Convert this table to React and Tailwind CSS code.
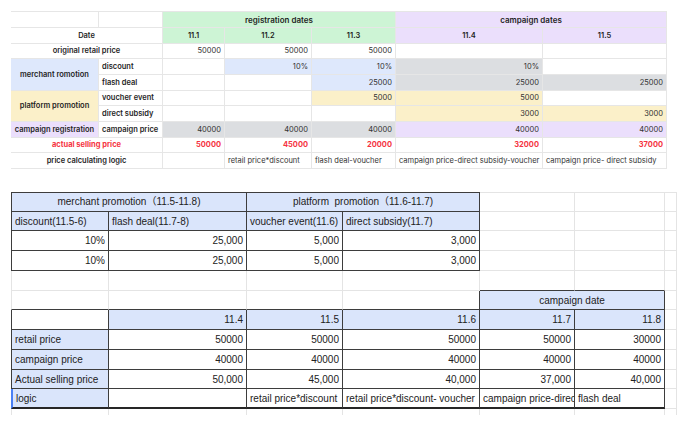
const green = "bg-[#cdf4d5]";
const purple = "bg-[#ebdffc]";
const blue = "bg-[#dee8fc]";
const yellow = "bg-[#fbf0c9]";
const gray = "bg-[#dcdee1]";

const TC = ({ className = "", children }) => (
  <div
    className={
      "flex items-center whitespace-nowrap overflow-hidden px-[3px] border-r border-b border-[#e6e6e6] " +
      className
    }
  >
    {children}
  </div>
);

const Rr = { d: "border-r border-r-[#3d3d3d]", f: "border-r border-r-[#e4e4e4]" };
const Bb = { d: "border-b border-b-[#3d3d3d]", f: "border-b border-b-[#e4e4e4]", k: "border-b-2 border-b-[#262626]" };
const Tt = { d: "border-t border-t-[#3d3d3d]", f: "border-t border-t-[#e4e4e4]" };
const Ll = { d: "border-l border-l-[#3d3d3d]", f: "border-l border-l-[#e4e4e4]", s: "border-l-2 border-l-[#4a80f5]" };

const BC = ({ r = "f", b = "f", t, l, className = "", children }) => (
  <div
    className={[
      "flex items-center whitespace-nowrap overflow-hidden px-[3px]",
      Rr[r],
      b && Bb[b],
      t && Tt[t],
      l && Ll[l],
      className,
    ]
      .filter(Boolean)
      .join(" ")}
  >
    {children}
  </div>
);

const bold = "font-semibold text-[#1f1f1f]";
const num = "justify-end text-[#333]";
const red = "justify-end font-bold text-[#f5333f]";

function TopTable() {
  return (
    <div className="grid grid-cols-[88px_64px_62px_87px_84px_147px_124px] grid-rows-[17px_repeat(9,15.67px)] text-[7.5px] font-['Inter',sans-serif] text-[#222]">
      {/* header */}
      <TC className="border-t" />
      <TC className="border-t" />
      <TC className={`col-span-3 justify-center border-t text-[8px] ${green} ${bold}`}>registration dates</TC>
      <TC className={`col-span-2 justify-center border-t text-[8px] ${purple} ${bold}`}>campaign dates</TC>

      <TC className={`col-span-2 justify-center ${bold}`}>Date</TC>
      <TC className={`justify-center ${green} ${bold}`}>11.1</TC>
      <TC className={`justify-center ${green} ${bold}`}>11.2</TC>
      <TC className={`justify-center ${green} ${bold}`}>11.3</TC>
      <TC className={`justify-center ${purple} ${bold}`}>11.4</TC>
      <TC className={`justify-center ${purple} ${bold}`}>11.5</TC>

      <TC className={`col-span-2 justify-center ${bold}`}>original retail price</TC>
      <TC className={num}>50000</TC>
      <TC className={num}>50000</TC>
      <TC className={num}>50000</TC>
      <TC />
      <TC />

      <TC className={`row-span-2 justify-center ${blue} ${bold}`}>merchant romotion</TC>
      <TC className={bold}>discount</TC>
      <TC />
      <TC className={`${num} ${blue}`}>10%</TC>
      <TC className={`${num} ${blue}`}>10%</TC>
      <TC className={`${num} ${gray}`}>10%</TC>
      <TC />

      <TC className={bold}>flash deal</TC>
      <TC />
      <TC />
      <TC className={`${num} ${blue}`}>25000</TC>
      <TC className={`${num} ${gray}`}>25000</TC>
      <TC className={`${num} ${gray}`}>25000</TC>

      <TC className={`row-span-2 justify-center ${yellow} ${bold}`}>platform promotion</TC>
      <TC className={bold}>voucher event</TC>
      <TC />
      <TC />
      <TC className={`${num} ${yellow}`}>5000</TC>
      <TC className={`${num} ${yellow}`}>5000</TC>
      <TC />

      <TC className={bold}>direct subsidy</TC>
      <TC />
      <TC />
      <TC />
      <TC className={`${num} ${yellow}`}>3000</TC>
      <TC className={`${num} ${yellow}`}>3000</TC>

      <TC className={`justify-center ${purple} ${bold}`}>campaign registration</TC>
      <TC className={bold}>campaign price</TC>
      <TC className={`${num} ${gray}`}>40000</TC>
      <TC className={`${num} ${gray}`}>40000</TC>
      <TC className={`${num} ${gray}`}>40000</TC>
      <TC className={`${num} ${purple}`}>40000</TC>
      <TC className={`${num} ${purple}`}>40000</TC>

      <TC className="col-span-2 justify-center font-bold text-[#f5333f]">actual selling price</TC>
      <TC className={red}>50000</TC>
      <TC className={red}>45000</TC>
      <TC className={red}>20000</TC>
      <TC className={red}>32000</TC>
      <TC className={red}>37000</TC>

      <TC className={`col-span-2 justify-center ${bold}`}>price calculating logic</TC>
      <TC />
      <TC className="text-[#333]">retail price*discount</TC>
      <TC className="text-[#333]">flash deal-voucher</TC>
      <TC className="text-[#333]">campaign price-direct subsidy-voucher</TC>
      <TC className="text-[#333]">campaign price- direct subsidy</TC>
    </div>
  );
}

const hb = "bg-[#dae5fb]";

function BottomSheet() {
  return (
    <div className="grid grid-cols-[98px_138px_96px_137px_95px_90px_12px] grid-rows-[repeat(11,19.75px)_6px] text-[10px] font-['Liberation_Sans','Noto_Sans_CJK_SC',sans-serif] text-[#222]">
      {/* row 1 */}
      <BC t="d" l="d" r="d" b="d" className={`col-span-2 justify-center ${hb}`}>merchant promotion（11.5-11.8)</BC>
      <BC t="d" r="d" b="d" className={`col-span-2 justify-center whitespace-pre ${hb}`}>platform  promotion（11.6-11.7)</BC>
      <BC t="f" />
      <BC t="f" />
      <BC t="f" />

      {/* row 2 */}
      <BC l="d" r="d" b="d" className={hb}>discount(11.5-6)</BC>
      <BC r="d" b="d" className={hb}>flash deal(11.7-8)</BC>
      <BC r="d" b="d" className={hb}>voucher event(11.6)</BC>
      <BC r="d" b="d" className={hb}>direct subsidy(11.7)</BC>
      <BC />
      <BC />
      <BC />

      {/* rows 3-4 */}
      {[0, 1].map((i) => (
        <div key={i} className="contents">
          <BC l="d" r="d" b="d" className="justify-end">10%</BC>
          <BC r="d" b="d" className="justify-end">25,000</BC>
          <BC r="d" b="d" className="justify-end">5,000</BC>
          <BC r="d" b="d" className="justify-end">3,000</BC>
          <BC />
          <BC />
          <BC />
        </div>
      ))}

      {/* row 5 */}
      <BC l="f" />
      <BC />
      <BC />
      <BC />
      <BC b="d" />
      <BC b="d" />
      <BC />

      {/* row 6 */}
      <BC l="f" b="d" />
      <BC b="d" />
      <BC b="d" />
      <BC r="d" b="d" />
      <BC r="d" b="d" className={`col-span-2 justify-center ${hb}`}>campaign date</BC>
      <BC />

      {/* row 7 */}
      <BC l="d" r="d" b="d" />
      <BC r="d" b="d" className={`justify-end ${hb}`}>11.4</BC>
      <BC r="d" b="d" className={`justify-end ${hb}`}>11.5</BC>
      <BC r="d" b="d" className={`justify-end ${hb}`}>11.6</BC>
      <BC r="d" b="d" className={`justify-end ${hb}`}>11.7</BC>
      <BC r="d" b="d" className={`justify-end ${hb}`}>11.8</BC>
      <BC />

      {[
        ["retail price", "50000", "50000", "50000", "50000", "30000"],
        ["campaign price", "40000", "40000", "40000", "40000", "40000"],
        ["Actual selling price", "50,000", "45,000", "40,000", "37,000", "40,000"],
      ].map((row) => (
        <div key={row[0]} className="contents">
          <BC l="d" r="d" b="d" className={hb}>{row[0]}</BC>
          {row.slice(1).map((v, j) => (
            <BC key={j} r="d" b="d" className="justify-end">{v}</BC>
          ))}
          <BC />
        </div>
      ))}

      {/* row 11 */}
      <BC l="s" r="d" b="k" className={hb}>logic</BC>
      <BC r="d" b="k" />
      <BC r="d" b="k">retail price*discount</BC>
      <BC r="d" b="k">retail price*discount- voucher</BC>
      <BC r="d" b="k" className="pr-0">campaign price-direct subsidy-voucher</BC>
      <BC r="d" b="k">flash deal</BC>
      <BC />

      {/* stub */}
      <BC b={null} className="border-l border-l-[#e4e4e4]" />
      <BC b={null} />
      <BC b={null} />
      <BC b={null} />
      <BC b={null} />
      <BC b={null} />
      <BC b={null} />
    </div>
  );
}

export default function App() {
  return (
    <div className="w-[687px] h-[428px] bg-white overflow-hidden pl-[11px] pt-[11px] flex flex-col gap-[23px]">
      <TopTable />
      <BottomSheet />
    </div>
  );
}
